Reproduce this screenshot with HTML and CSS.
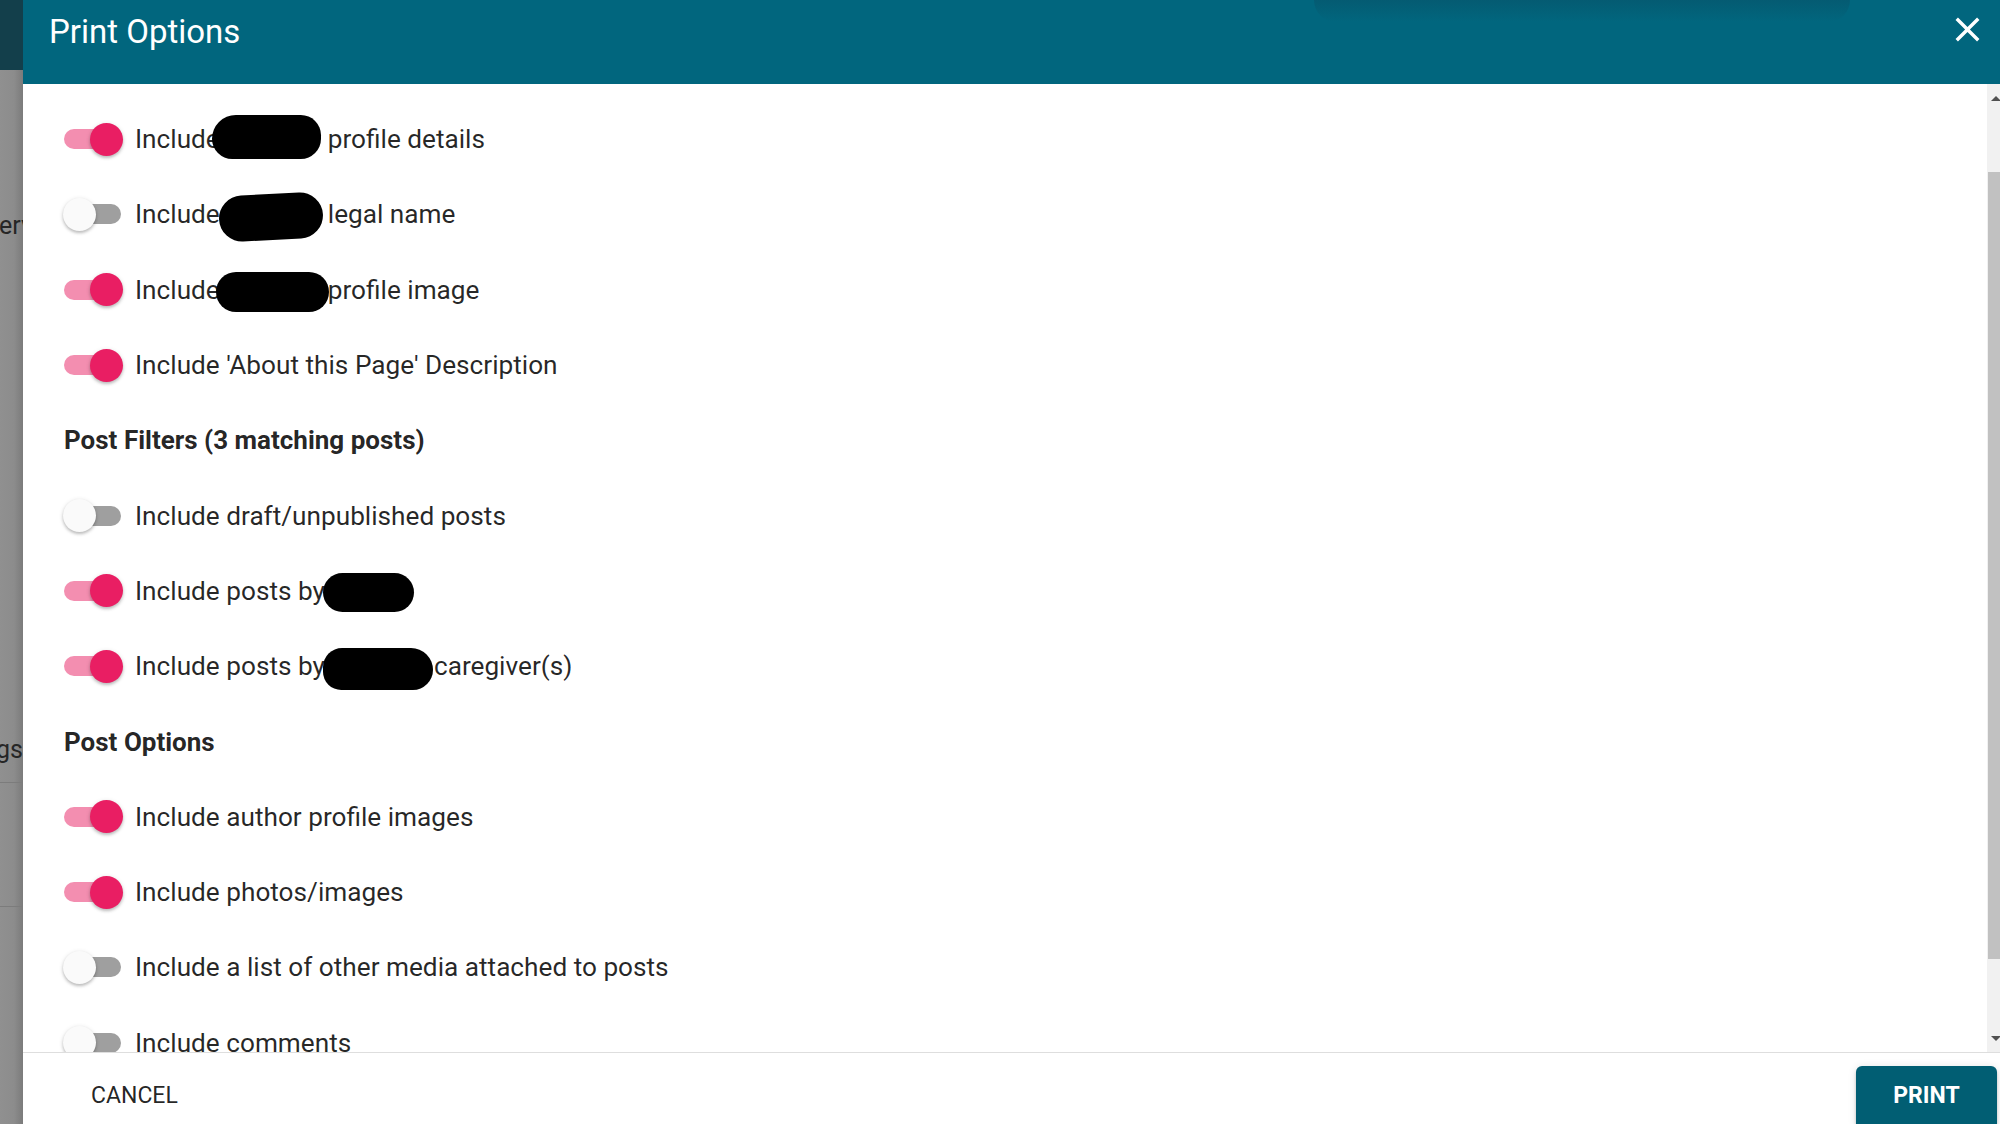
FILE: index.html
```html
<!DOCTYPE html>
<html lang="en">
<head>
  <meta charset="UTF-8">
  <title>Print Options</title>
  <meta name="viewport" content="width=device-width, initial-scale=1.0">
  <link rel="stylesheet" href="styles.css">
</head>
<body>
  <div class="page">
    <!-- Página por trás do overlay -->
    <aside class="backdrop">
      <div class="backdrop-bar"></div>
      <div class="backdrop-text first">erv</div>
      <div class="backdrop-text second">gs</div>
      <div class="backdrop-line"></div>
      <div class="backdrop-line lower"></div>
    </aside>

    <!-- Diálogo -->
    <section class="dialog">
      <header class="dialog-header">
        <div class="header-glow"></div>
        <h1>Print Options</h1>
        <button class="close" aria-label="Close">
          <svg width="41" height="41" viewBox="0 0 24 24"><path fill="#fff" d="M19 6.41L17.59 5 12 10.59 6.41 5 5 6.41 10.59 12 5 17.59 6.41 19 12 13.41 17.59 19 19 17.59 13.41 12z"/></svg>
        </button>
      </header>

      <div class="dialog-body">
        <div class="options">
          <div class="option">
            <span class="switch on"><span class="thumb"></span></span>
            <span class="label">Include<span class="redact r1"></span>profile details</span>
          </div>
          <div class="option">
            <span class="switch"><span class="thumb"></span></span>
            <span class="label">Include<span class="redact r2"></span>legal name</span>
          </div>
          <div class="option">
            <span class="switch on"><span class="thumb"></span></span>
            <span class="label">Include<span class="redact r3"></span>profile image</span>
          </div>
          <div class="option">
            <span class="switch on"><span class="thumb"></span></span>
            <span class="label">Include 'About this Page' Description</span>
          </div>

          <div class="section-title">Post Filters (3 matching posts)</div>

          <div class="option">
            <span class="switch"><span class="thumb"></span></span>
            <span class="label">Include draft/unpublished posts</span>
          </div>
          <div class="option">
            <span class="switch on"><span class="thumb"></span></span>
            <span class="label">Include posts by<span class="redact r4"></span></span>
          </div>
          <div class="option">
            <span class="switch on"><span class="thumb"></span></span>
            <span class="label">Include posts by<span class="redact r5"></span>caregiver(s)</span>
          </div>

          <div class="section-title">Post Options</div>

          <div class="option">
            <span class="switch on"><span class="thumb"></span></span>
            <span class="label">Include author profile images</span>
          </div>
          <div class="option">
            <span class="switch on"><span class="thumb"></span></span>
            <span class="label">Include photos/images</span>
          </div>
          <div class="option">
            <span class="switch"><span class="thumb"></span></span>
            <span class="label">Include a list of other media attached to posts</span>
          </div>
          <div class="option">
            <span class="switch"><span class="thumb"></span></span>
            <span class="label">Include comments</span>
          </div>
        </div>

        <!-- Barra de rolagem -->
        <div class="scrollbar">
          <div class="sb-btn"><span class="arrow up"></span></div>
          <div class="sb-thumb"></div>
          <div class="sb-btn bottom"><span class="arrow down"></span></div>
        </div>
      </div>

      <footer class="dialog-footer">
        <button class="btn-cancel">CANCEL</button>
        <button class="btn-print">PRINT</button>
      </footer>
    </section>
  </div>
</body>
</html>
```

FILE: styles.css
```css
/* Layout geral */
html, body {
  margin: 0;
  padding: 0;
}
body {
  width: 2000px;
  height: 1124px;
  overflow: hidden;
  font-family: Roboto, "Noto Sans", sans-serif;
  background: #8e8e8e;
}
.page {
  display: flex;
  height: 1124px;
}

/* Fundo escurecido */
.backdrop {
  width: 23px;
  flex-shrink: 0;
  overflow: hidden;
  display: flex;
  flex-direction: column;
  background: linear-gradient(to right, #909090 0, #8c8c8c 14px, #7b7b7b 23px);
}
.backdrop-bar {
  height: 70px;
  background: #133f4b;
}
.backdrop-text {
  font-size: 25px;
  line-height: 32px;
  color: #262626;
  white-space: nowrap;
}
.backdrop-text.first {
  margin-top: 140px;
  margin-left: -1px;
}
.backdrop-text.second {
  margin-top: 492px;
  margin-left: -4px;
}
.backdrop-line {
  height: 1px;
  margin-top: 16px;
  background: #7c7c7c;
}
.backdrop-line.lower {
  margin-top: 123px;
}

/* Diálogo */
.dialog {
  flex: 1;
  display: flex;
  flex-direction: column;
  background: #fff;
  min-width: 0;
}
.dialog-header {
  position: relative;
  height: 84px;
  flex-shrink: 0;
  background: #01667e;
  display: flex;
  justify-content: space-between;
  align-items: flex-start;
  padding: 0 12px 0 26px;
  box-sizing: border-box;
}
.header-glow {
  position: absolute;
  left: 1291px;
  top: 0;
  width: 536px;
  height: 22px;
  background: linear-gradient(to bottom, rgba(20, 40, 60, 0.18), rgba(20, 40, 60, 0));
  border-radius: 0 0 40px 40px;
}
.dialog-header h1 {
  margin: 0;
  padding-top: 12px;
  font-size: 33px;
  line-height: 40px;
  font-weight: 400;
  color: #fff;
}
.close {
  margin-top: 9px;
  padding: 0;
  border: none;
  background: none;
  width: 41px;
  height: 41px;
}
.close svg {
  display: block;
}

/* Conteúdo */
.dialog-body {
  flex: 1;
  display: flex;
  min-height: 0;
}
.options {
  flex: 1;
  overflow: hidden;
  padding: 17.5px 0 0 41px;
}
.option,
.section-title {
  height: 75.3px;
  display: flex;
  align-items: center;
}
.section-title {
  font-size: 26px;
  font-weight: 700;
  color: rgba(0, 0, 0, 0.87);
}
.label {
  display: flex;
  align-items: center;
  font-size: 26.2px;
  color: rgba(0, 0, 0, 0.85);
  white-space: pre;
}

/* Interruptores */
.switch {
  width: 57px;
  height: 20px;
  margin-right: 14px;
  border-radius: 10px;
  background: #9f9f9f;
  display: flex;
  align-items: center;
  flex-shrink: 0;
}
.thumb {
  width: 33px;
  height: 33px;
  border-radius: 50%;
  background: #fafafa;
  margin-left: -1px;
  flex-shrink: 0;
  box-shadow: 0 2px 3px rgba(0, 0, 0, 0.2), 0 1px 5px rgba(0, 0, 0, 0.12);
}
.switch.on {
  background: #f38eb0;
  justify-content: flex-end;
}
.switch.on .thumb {
  background: #e91e63;
  margin-left: 0;
  margin-right: -2px;
}

/* Tarjas pretas */
.redact {
  display: inline-block;
  background: #000;
  border-radius: 23px;
  height: 44px;
}
.r1 { width: 109px; margin: 0 7px 0 -8px; transform: translateY(-2px); border-radius: 26px 22px 22px 22px; }
.r2 { width: 104px; height: 46px; margin: 0 5px 0 -1px; transform: translateY(3px) rotate(-3deg); }
.r3 { width: 113px; height: 40px; margin: 0 -1px 0 -4px; transform: translateY(2px); border-radius: 20px; }
.r4 { width: 91px; height: 39px; margin: 0 0 0 -2px; transform: translateY(2px); border-radius: 20px; }
.r5 { width: 110px; height: 42px; margin: 0 1px 0 -2px; transform: translateY(3px); border-radius: 21px 24px 22px 20px; }

/* Barra de rolagem */
.scrollbar {
  width: 13px;
  flex-shrink: 0;
  overflow: hidden;
  background: #f1f1f1;
  display: flex;
  flex-direction: column;
}
.sb-btn {
  width: 17px;
  height: 28px;
  display: flex;
  align-items: center;
  justify-content: center;
  flex-shrink: 0;
}
.sb-btn.bottom {
  margin-top: auto;
}
.arrow {
  width: 0;
  height: 0;
  border-left: 5px solid transparent;
  border-right: 5px solid transparent;
}
.arrow.up {
  border-bottom: 5px solid #505050;
}
.arrow.down {
  border-top: 5px solid #505050;
}
.sb-thumb {
  width: 15px;
  margin: 60px 0 0 1px;
  height: 787px;
  background: #c1c1c1;
  flex-shrink: 0;
}

/* Rodapé */
.dialog-footer {
  height: 72px;
  flex-shrink: 0;
  box-sizing: border-box;
  border-top: 1px solid #dedede;
  display: flex;
  justify-content: space-between;
  align-items: flex-start;
  padding: 13px 3px 0 42px;
}
.dialog-footer button {
  height: 59px;
  border: none;
  font-family: Roboto, "Noto Sans", sans-serif;
  font-size: 23px;
  cursor: pointer;
}
.btn-cancel {
  padding: 0 26px;
  background: transparent;
  color: rgba(0, 0, 0, 0.87);
}
.btn-print {
  width: 141px;
  padding: 0;
  font-size: 23.5px;
  font-weight: 700;
  color: #fff;
  background: #015e73;
  border-radius: 6px 6px 0 0;
  box-shadow: 0 3px 3px rgba(0, 0, 0, 0.2), 0 1px 8px rgba(0, 0, 0, 0.12);
}
```
